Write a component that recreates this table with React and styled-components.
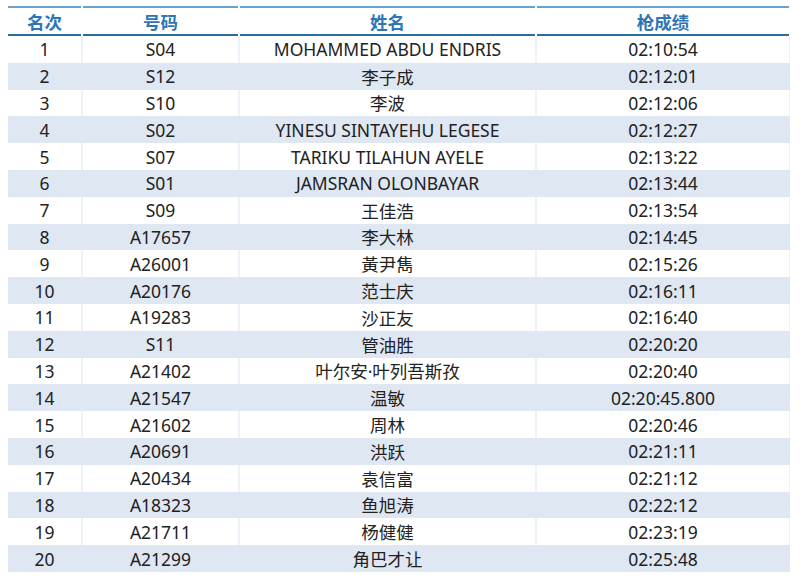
import React from "react";
import styled, { createGlobalStyle } from "styled-components";

const GlobalStyle = createGlobalStyle`
  html, body {
    margin: 0;
    padding: 0;
    background: #ffffff;
  }
  body {
    font-family: "Noto Sans", "Noto Sans CJK SC", sans-serif;
    color: #222222;
  }
`;

const Page = styled.div`
  padding: 6px 10px 0 8px;
`;

const Table = styled.div`
  display: flex;
  flex-direction: column;
  width: 782px;
`;

const Row = styled.div`
  display: grid;
  grid-template-columns: 73px 155px 295px 252px;
  column-gap: 2px;
  height: ${(props) => (props.header ? "30px" : "26.8px")};
  background: ${(props) =>
    props.header ? "#ffffff" : props.shade ? "#dee7f2" : "#eef3f9"};
`;

const Cell = styled.div`
  display: flex;
  align-items: center;
  justify-content: center;
  font-size: 17.5px;
  white-space: nowrap;
  background: ${(props) => (props.shade ? "#dee7f2" : "#ffffff")};
`;

const HeadCell = styled(Cell)`
  box-sizing: border-box;
  padding-top: 1px;
  border-top: 2px solid #6aa2cf;
  border-bottom: 3px solid #2b6e9c;
  color: #2e75b6;
  font-weight: 700;
  background: #ffffff;
`;

const results = [
  ["1", "S04", "MOHAMMED ABDU ENDRIS", "02:10:54"],
  ["2", "S12", "李子成", "02:12:01"],
  ["3", "S10", "李波", "02:12:06"],
  ["4", "S02", "YINESU SINTAYEHU LEGESE", "02:12:27"],
  ["5", "S07", "TARIKU TILAHUN AYELE", "02:13:22"],
  ["6", "S01", "JAMSRAN OLONBAYAR", "02:13:44"],
  ["7", "S09", "王佳浩", "02:13:54"],
  ["8", "A17657", "李大林", "02:14:45"],
  ["9", "A26001", "黃尹雋", "02:15:26"],
  ["10", "A20176", "范士庆", "02:16:11"],
  ["11", "A19283", "沙正友", "02:16:40"],
  ["12", "S11", "管油胜", "02:20:20"],
  ["13", "A21402", "叶尔安·叶列吾斯孜", "02:20:40"],
  ["14", "A21547", "温敏", "02:20:45.800"],
  ["15", "A21602", "周林", "02:20:46"],
  ["16", "A20691", "洪跃", "02:21:11"],
  ["17", "A20434", "袁信富", "02:21:12"],
  ["18", "A18323", "鱼旭涛", "02:22:12"],
  ["19", "A21711", "杨健健", "02:23:19"],
  ["20", "A21299", "角巴才让", "02:25:48"],
];

const App = () => {
  return (
    <Page>
      <GlobalStyle />
      <Table>
        <Row header>
          <HeadCell>名次</HeadCell>
          <HeadCell>号码</HeadCell>
          <HeadCell>姓名</HeadCell>
          <HeadCell>枪成绩</HeadCell>
        </Row>
        {results.map((r, i) => (
          <Row key={i} shade={i % 2 === 1}>
            {r.map((v, j) => (
              <Cell key={j} shade={i % 2 === 1}>
                {v}
              </Cell>
            ))}
          </Row>
        ))}
      </Table>
    </Page>
  );
};

export default App;
